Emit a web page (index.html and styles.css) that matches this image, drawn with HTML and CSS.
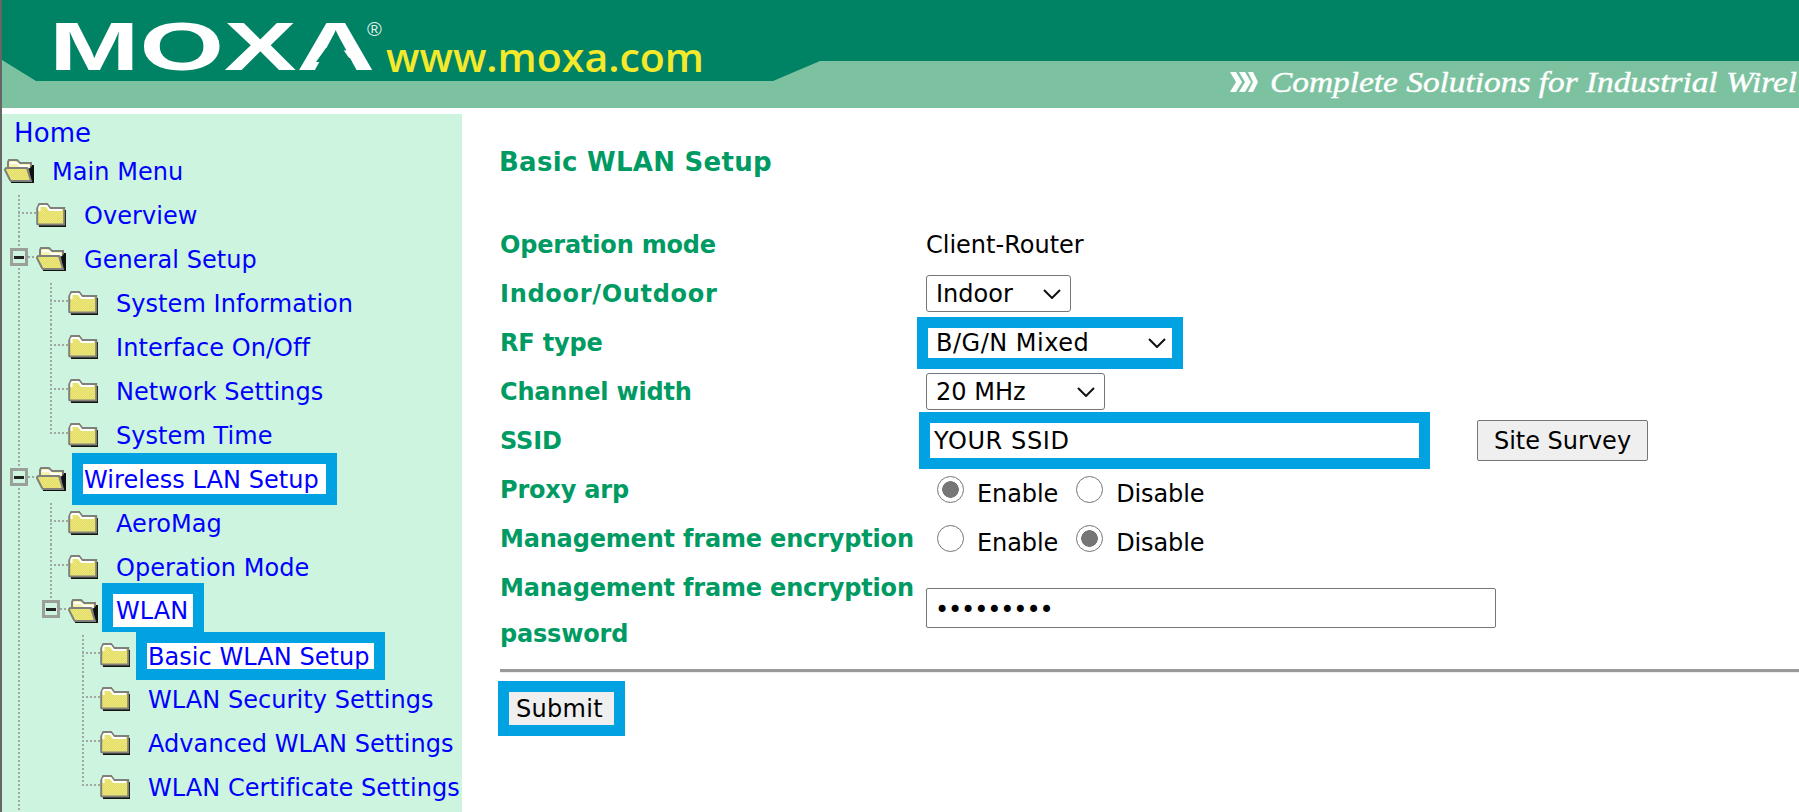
FILE: index.html
```html
<!DOCTYPE html>
<html lang="en">
<head>
<meta charset="utf-8">
<title>Basic WLAN Setup</title>
<link rel="stylesheet" href="styles.css">
</head>
<body>
<svg class="defs" width="0" height="0" aria-hidden="true">
  <defs>
    <pattern id="dither" width="2" height="2" patternUnits="userSpaceOnUse">
      <rect width="2" height="2" fill="#f3e85e"/>
      <rect width="1" height="1" fill="#dcdc84"/>
      <rect x="1" y="1" width="1" height="1" fill="#dcdc84"/>
    </pattern>
    <symbol id="closed" viewBox="0 0 32 26">
      <path d="M3 24h25V9h2v17H3z" fill="#111"/>
      <path d="M1.2 23V7.500l2-4.500h8l3 4h14v16.500H2z" fill="url(#dither)" stroke="#80807a" stroke-width="2"/>
      <path d="M3.500 10V6l1-1h6l3 4h12.500" fill="none" stroke="#fff" stroke-width="2"/>
    </symbol>
    <symbol id="open" viewBox="0 0 32 26">
      <path d="M4 10V5l1-2h8l3 3h11v6H5z" fill="#f6f2b0" stroke="#80807a" stroke-width="2"/>
      <path d="M6 6h7l3 3h9" fill="none" stroke="#fff" stroke-width="2"/>
      <path d="M25 12l3-3v-1h2v18H7v-2h19z" fill="#111"/>
      <path d="M1 13q0-2 2-2h20l4 13H7l-1-1z" fill="url(#dither)" stroke="#80807a" stroke-width="2"/>
    </symbol>
  </defs>
</svg>
<div class="page">
  <svg class="banner" width="1797" height="108" viewBox="2 0 1797 108" role="img" aria-label="MOXA www.moxa.com">
    <rect class="b-light" x="2" y="0" width="1797" height="108"/>
    <path class="b-dark" d="M2 0H1799V61H820L773 81H36L2 60Z"/>
    <text class="logo" x="49" y="70" textLength="326" lengthAdjust="spacingAndGlyphs">MOXA</text>
    <path class="b-dark" d="M326 48H342L352 62H316Z"/>
    <text class="reg" x="367" y="36">®</text>
    <text class="url" x="386" y="72" textLength="318" lengthAdjust="spacingAndGlyphs">www.moxa.com</text>
    <path class="tag-chev" d="M1230 72h6l6 10-6 10h-6l6-10zM1239 72h6l6 10-6 10h-6l6-10zM1248 72h5l5 10-5 10h-5l5-10z"/>
    <text class="tag" x="1270" y="92" textLength="527" lengthAdjust="spacingAndGlyphs">Complete Solutions for Industrial Wirel</text>
  </svg>
  <div class="layout">
    <nav class="side">
      <div class="home"><a href="#">Home</a></div>
      <div class="row"><svg class="fo"><use href="#open"/></svg><a href="#">Main Menu</a></div>

      <div class="row"><i class="g t first"></i><svg class="fc"><use href="#closed"/></svg><a href="#">Overview</a></div>
      <div class="row"><i class="g v"><b class="box"></b></i><svg class="fo"><use href="#open"/></svg><a href="#">General Setup</a></div>

      <div class="row"><i class="g v"></i><i class="g t first"></i><svg class="fc"><use href="#closed"/></svg><a href="#">System Information</a></div>
      <div class="row"><i class="g v"></i><i class="g t"></i><svg class="fc"><use href="#closed"/></svg><a href="#">Interface On/Off</a></div>
      <div class="row"><i class="g v"></i><i class="g t"></i><svg class="fc"><use href="#closed"/></svg><a href="#">Network Settings</a></div>
      <div class="row"><i class="g v"></i><i class="g l"></i><svg class="fc"><use href="#closed"/></svg><a href="#">System Time</a></div>

      <div class="row"><i class="g v"><b class="box"></b></i><svg class="fo"><use href="#open"/></svg><a href="#" class="hl hl-a">Wireless LAN Setup</a></div>

      <div class="row"><i class="g v"></i><i class="g t first"></i><svg class="fc"><use href="#closed"/></svg><a href="#">AeroMag</a></div>
      <div class="row"><i class="g v"></i><i class="g t"></i><svg class="fc"><use href="#closed"/></svg><a href="#">Operation Mode</a></div>
      <div class="row"><i class="g v"></i><i class="g n"><b class="box"></b></i><svg class="fo"><use href="#open"/></svg><a href="#" class="hl-b">WLAN</a></div>

      <div class="row"><i class="g v"></i><i class="g"></i><i class="g t first"></i><svg class="fc"><use href="#closed"/></svg><a href="#" class="hl hl-c">Basic WLAN Setup</a></div>
      <div class="row"><i class="g v"></i><i class="g"></i><i class="g t"></i><svg class="fc"><use href="#closed"/></svg><a href="#">WLAN Security Settings</a></div>
      <div class="row"><i class="g v"></i><i class="g"></i><i class="g t"></i><svg class="fc"><use href="#closed"/></svg><a href="#">Advanced WLAN Settings</a></div>
      <div class="row"><i class="g v"></i><i class="g"></i><i class="g l"></i><svg class="fc"><use href="#closed"/></svg><a href="#">WLAN Certificate Settings</a></div>
      <div class="row"><i class="g v"></i></div>
    </nav>
    <main class="main">
      <h1 class="title">Basic WLAN Setup</h1>
      <form class="form">
        <div class="lab">Operation mode</div>
        <div class="val">Client-Router</div>

        <div class="lab lab-wide">Indoor/Outdoor</div>
        <div class="val"><select class="sel w-indoor"><option>Indoor</option></select></div>

        <div class="lab">RF type</div>
        <div class="val"><select class="sel sel-hl"><option>B/G/N Mixed</option></select></div>

        <div class="lab">Channel width</div>
        <div class="val"><select class="sel w-chan"><option>20 MHz</option></select></div>

        <div class="lab">SSID</div>
        <div class="val"><input class="ssid" type="text" value="YOUR SSID"><button class="btn" type="button">Site Survey</button></div>

        <div class="lab">Proxy arp</div>
        <div class="val radios"><input class="rad" type="radio" name="p" checked><span>Enable</span><input class="rad" type="radio" name="p"><span>Disable</span></div>

        <div class="lab">Management frame encryption</div>
        <div class="val radios"><input class="rad" type="radio" name="m"><span>Enable</span><input class="rad" type="radio" name="m" checked><span>Disable</span></div>

        <div class="lab lab-two">Management frame encryption password</div>
        <div class="val val-two"><input class="pwd" type="password" value="123456789"></div>
      </form>
      <hr class="rule">
      <button class="submit" type="button">Submit</button>
    </main>
  </div>
</div>
</body>
</html>
```
FILE: styles.css
```css
* { box-sizing: border-box; }
html, body { margin: 0; height: 100%; background: #fff; overflow: hidden; }
body { font-family: "DejaVu Sans", Verdana, sans-serif; font-size: 24px; color: #000; }
.defs { position: absolute; }
.page { height: 812px; border-left: 2px solid #666; overflow: hidden; }
.banner { display: block; }
.b-light { fill: #7dc2a0; }
.b-dark { fill: #008264; }
.logo { font: bold 69px "Liberation Sans", sans-serif; fill: #fff; }
.reg { font: 20px "Liberation Sans", sans-serif; fill: #dfeee8; }
.url { font: 600 40px "Open Sans", sans-serif; fill: #f5e92b; }
.tag { font: italic 30px "Liberation Serif", serif; fill: #fff; stroke: #fff; stroke-width: 0.4px; }
.tag-chev { fill: #fff; }

.layout { display: flex; padding-top: 6px; }
.side { width: 460px; height: 698px; background: #ccf4df; flex: none; overflow: hidden; padding-left: 2px; }
.side a { color: #0000ff; text-decoration: none; }
.home { height: 34px; line-height: 38px; padding-left: 10px; font-size: 26px; letter-spacing: 0.1px; }
.row { display: flex; height: 44px; line-height: 48px; white-space: nowrap; letter-spacing: 0.06px; }
.row > a { margin-left: 16px; }
.fc, .fo { flex: none; width: 32px; height: 26px; margin-top: 9px; }

.g { flex: none; display: block; width: 32px; height: 44px; }
.v, .t, .l, .n, .first { background-repeat: no-repeat; }
.v { background-image: repeating-linear-gradient(to bottom, #a0a89f 0 2px, transparent 2px 4px); background-size: 2px 44px; background-position: 14px 0; }
.t { background-image: repeating-linear-gradient(to bottom, #a0a89f 0 2px, transparent 2px 4px), repeating-linear-gradient(to right, #a0a89f 0 2px, transparent 2px 4px); background-size: 2px 44px, 18px 2px; background-position: 14px 0, 14px 20px; }
.t.first { background-size: 2px 41px, 18px 2px; background-position: 14px 3px, 14px 20px; }
.l { background-image: repeating-linear-gradient(to bottom, #a0a89f 0 2px, transparent 2px 4px), repeating-linear-gradient(to right, #a0a89f 0 2px, transparent 2px 4px); background-size: 2px 21px, 18px 2px; background-position: 14px 0, 14px 20px; }
.n { background-image: repeating-linear-gradient(to bottom, #a0a89f 0 2px, transparent 2px 4px), repeating-linear-gradient(to right, #a0a89f 0 2px, transparent 2px 4px); background-size: 2px 11px, 8px 2px; background-position: 14px 0, 24px 20px; }
.v:has(.box) { background-image: repeating-linear-gradient(to bottom, #a0a89f 0 2px, transparent 2px 4px), repeating-linear-gradient(to right, #a0a89f 0 2px, transparent 2px 4px); background-size: 2px 44px, 8px 2px; background-position: 14px 0, 24px 20px; }
.box { display: block; width: 18px; height: 18px; margin: 12px 0 0 6px; border: 3px solid #9a9f9a; background: #ccf4df linear-gradient(#222, #222) center / 10px 3px no-repeat; }

.hl { background: #fff; outline: 11px solid #00a2e2; height: 30px; line-height: 32px; width: 243px; padding-left: 1px; margin-top: 8px; margin-left: 15px !important; }
.row > .hl-b { background: #fff; background-clip: padding-box; border: solid #00a2e2; border-width: 11px 11px 5px; width: 102px; height: 49px; line-height: 35px; padding-left: 3px; margin: -5px 0 0 2px; }
.hl-c { width: 227px; height: 26px; line-height: 28px; margin-top: 11px; }

.main { flex: 1; min-width: 0; padding: 30px 0 0 38px; }
.title { margin: 0 0 0 -1px; font-size: 26px; line-height: 36px; font-weight: bold; color: #009a63; letter-spacing: 0.29px; }
.form { display: grid; grid-template-columns: 426px 1fr; grid-auto-rows: 49px; margin-top: 40px; }
.lab { color: #009a63; font-weight: bold; line-height: 51px; white-space: nowrap; letter-spacing: -0.18px; }
.lab-wide { letter-spacing: 0.7px; }
.val { display: flex; align-items: center; padding-top: 1px; }
.val:has(select), .val:has(.ssid) { padding-top: 0; }
.lab-two { grid-row: span 2; height: 90px; line-height: 46px; padding-top: 2px; white-space: normal; width: 420px; }
.val-two { grid-row: span 2; height: 90px; }
.sel { appearance: none; font: 24px "DejaVu Sans", sans-serif; height: 37px; color: #000; border: 1px solid #767676; border-radius: 3px; padding: 0 28px 0 9px; background: #fff url("data:image/svg+xml,%3Csvg xmlns='http://www.w3.org/2000/svg' width='18' height='10'%3E%3Cpath d='M1 1l8 8 8-8' fill='none' stroke='%23111' stroke-width='2'/%3E%3C/svg%3E") no-repeat right 9px center; }
.w-indoor { width: 145px; }
.w-chan { width: 179px; }
.sel-hl { width: 244px; height: 30px; margin-left: 2px; border: 0; border-radius: 0; outline: 11px solid #00a2e2; padding-left: 8px; letter-spacing: 0.5px; background-position: right 6px center; }
.ssid { font: 24px "DejaVu Sans", sans-serif; letter-spacing: 0.6px; width: 489px; height: 35px; margin-left: 4px; border: 0; outline: 11px solid #00a2e2; padding: 0 4px; color: #000; }
.btn { font: 24px "DejaVu Sans", sans-serif; height: 41px; width: 171px; margin-left: 58px; background: #efefef; border: 1px solid #767676; border-radius: 2px; padding: 0; color: #000; }
.radios { padding-top: 9px; letter-spacing: -0.1px; }
.rad { appearance: none; flex: none; width: 27px; height: 27px; margin: -10px 13px 0 11px; border: 1.5px solid #767676; border-radius: 50%; background: #fff; }
.rad:checked { background: radial-gradient(circle, #767676 0 8px, #fff 8.6px); }
.radios span + .rad { margin-left: 18px; }
.pwd { font: 24px "DejaVu Sans", sans-serif; width: 570px; height: 40px; border: 1px solid #767676; border-radius: 2px; padding: 5px 8px 0; margin-top: -2px; letter-spacing: -1.1px; }
.rule { margin: 8px 0 0; height: 3px; border: 0; background: #999; box-shadow: 0 1px 0 #eee; }
.submit { display: block; font: 24px "DejaVu Sans", sans-serif; letter-spacing: 0.3px; text-align: left; width: 105px; height: 33px; margin: 20px 0 0 9px; padding: 0 0 0 7px; background: #efefef; border: 0; outline: 11px solid #00a2e2; color: #000; }
```
